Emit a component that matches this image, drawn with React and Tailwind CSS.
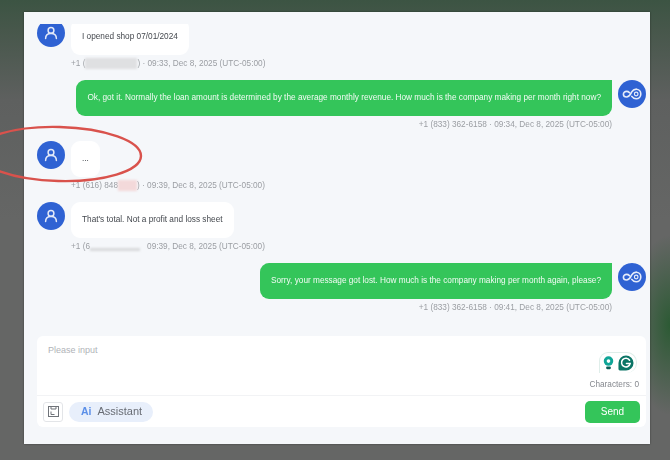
const UserAvatar = () => (
  <div className="w-[28px] h-[28px] shrink-0 rounded-full bg-[#2f62d3] flex items-center justify-center">
    <svg width="14" height="14" viewBox="0 0 14 14" fill="none" stroke="#e3e9f8" strokeWidth="1.5">
      <circle cx="7" cy="4.4" r="2.9" />
      <path d="M1.6 12.6c0-3 2.2-5 5.4-5s5.4 2 5.4 5" strokeLinecap="round" />
    </svg>
  </div>
);

const AgentAvatar = () => (
  <div className="w-[28px] h-[28px] shrink-0 rounded-full bg-[#2f62d3] flex items-center justify-center">
    <svg width="20" height="14" viewBox="0 0 20 14" fill="none" stroke="#e6ecfa" strokeWidth="1.6">
      <path d="M7.4 5.6C6.6 4.8 5.6 4.4 4.6 4.4 3 4.4 1.4 5.4 1.4 7.2s1.6 2.8 3.2 2.8c2.6 0 3.6-2.4 5-4.8 1-1.8 2.6-3 4.6-3" strokeLinecap="round" />
      <path d="M14.2 2.2c2.6 0 4.6 2.1 4.6 4.8s-2 4.8-4.6 4.8c-2 0-3.4-.9-4.4-2.4" strokeLinecap="round" />
      <circle cx="14.2" cy="7" r="1.8" strokeWidth="1.2" />
    </svg>
  </div>
);

const Meta = ({ children, right }) => (
  <div className={`text-[8.25px] leading-[17px] text-[#9b9ea3] whitespace-nowrap flex ${right ? 'justify-end' : ''}`}>
    {children}
  </div>
);

const Hidden = ({ className }) => <span className={`inline-block blur-[1px] ${className}`}></span>;

const Incoming = ({ text, meta }) => (
  <div className="flex gap-[6px] mb-[8px]">
    <UserAvatar />
    <div>
      <div className="h-[36px] w-fit flex items-center px-[11px] bg-white rounded-[9px] text-[8.25px] text-[#44484e]">
        {text}
      </div>
      <Meta>{meta}</Meta>
    </div>
  </div>
);

const Outgoing = ({ text, meta }) => (
  <div className="flex justify-end gap-[6px] mb-[8px]">
    <div>
      <div className="h-[36px] w-fit flex items-center px-[11px] bg-[#34c55a] rounded-[9px] rounded-tr-none text-[8.25px] text-[#f2fbf4] whitespace-nowrap">
        {text}
      </div>
      <Meta right>{meta}</Meta>
    </div>
    <AgentAvatar />
  </div>
);

export default function App() {
  return (
    <div className="relative w-[670px] h-[460px] overflow-hidden pt-[12px] pl-[24px] pr-[20px] pb-[16px] font-['Liberation_Sans',Arial,sans-serif] bg-[radial-gradient(ellipse_40px_90px_at_100%_325px,#2c5a34_0%,#2c5a3400_100%),linear-gradient(180deg,#3c5443_0px,#47574b_30px,#5e605f_100px,#656665_220px,#656665_460px)]">
      <div className="h-full flex flex-col bg-[#f5f7fa] pl-[13px] pr-[4px] pt-[12px] pb-[17px] shadow-[0_0_2px_#00000066] blur-[0.3px]">
        {/* Messages */}
        <div className="flex-1 min-h-0 overflow-hidden flex flex-col justify-end pb-[12px]">
          <Incoming
            text="I opened shop 07/01/2024"
            meta={<>+1 (<Hidden className="w-[52px] h-[11px] mt-[3px] bg-[#dfe0e2]" />) · 09:33, Dec 8, 2025 (UTC-05:00)</>}
          />
          <Outgoing
            text="Ok, got it. Normally the loan amount is determined by the average monthly revenue. How much is the company making per month right now?"
            meta="+1 (833) 362-6158 · 09:34, Dec 8, 2025 (UTC-05:00)"
          />
          <Incoming
            text="..."
            meta={<>+1 (616) 848<Hidden className="w-[19px] h-[11px] mt-[3px] bg-[#f3d9da]" />) · 09:39, Dec 8, 2025 (UTC-05:00)</>}
          />
          <Incoming
            text="That's total. Not a profit and loss sheet"
            meta={<>+1 (6<Hidden className="w-[50px] h-[3px] mt-[10px] mr-[7px] bg-[#d8dadc]" />09:39, Dec 8, 2025 (UTC-05:00)</>}
          />
          <Outgoing
            text="Sorry, your message got lost. How much is the company making per month again, please?"
            meta="+1 (833) 362-6158 · 09:41, Dec 8, 2025 (UTC-05:00)"
          />
        </div>

        {/* Input box */}
        <div className="h-[91px] shrink-0 bg-white rounded-[6px] flex flex-col">
          <div className="flex-1 px-[11px] pt-[8px] pr-[7px] border-b border-[#f2f3f5] flex flex-col">
            <div className="text-[9px] leading-[12px] text-[#b0b3b8]">Please input</div>
            <div className="self-end mt-[-4px] mr-[2px] w-[38px] h-[21px] border border-[#dfeeea] border-b-0 rounded-t-[9px] rounded-r-[10px] flex items-center justify-center gap-[4px]">
              <svg width="11" height="14" viewBox="0 0 12 15">
                <circle cx="6" cy="5.4" r="5.2" fill="#0fa597" />
                <circle cx="6" cy="5.4" r="2" fill="#fff" />
                <rect x="3.4" y="11.4" width="5.2" height="2.8" rx="1.2" fill="#0b5f58" />
              </svg>
              <svg width="16" height="16" viewBox="0 0 17 17">
                <path d="M8.5 0.5a8 8 0 1 1 0 16H2a1.5 1.5 0 0 1-1.5-1.5V8.5a8 8 0 0 1 8-8z" fill="#0b7566" />
                <path d="M12.3 5.6a4.6 4.6 0 1 0 .6 3.4H9" fill="none" stroke="#fff" strokeWidth="1.6" strokeLinecap="round" />
              </svg>
            </div>
            <div className="self-end mt-[6px] text-[8.25px] leading-[12px] text-[#85888e]">Characters: 0</div>
          </div>
          <div className="h-[31px] shrink-0 flex items-center px-[6px]">
            <button className="w-[20px] h-[20px] flex items-center justify-center border border-[#e3e5e8] rounded-[3px] bg-white">
              <svg width="11" height="11" viewBox="0 0 11 11" fill="none" stroke="#6f7379" strokeWidth="1">
                <rect x="0.5" y="0.5" width="10" height="10" />
                <path d="M3 0.5v2.5h5v-2.5M3 5.5v3h3.5" />
              </svg>
            </button>
            <div className="ml-[6px] w-[84px] h-[20px] rounded-full bg-[#e8effb] flex items-center pl-[12px] gap-[6px]">
              <span className="text-[10.5px] font-semibold text-[#5b8fe8]">Ai</span>
              <span className="text-[11px] text-[#686c74]">Assistant</span>
            </div>
            <button className="ml-auto w-[55px] h-[22px] rounded-[5px] bg-[#34c55a] text-white text-[10px]">Send</button>
          </div>
        </div>
      </div>

      {/* Hand-drawn red circle */}
      <svg className="absolute inset-0 pointer-events-none" width="670" height="460" fill="none">
        <ellipse cx="59" cy="154" rx="82" ry="27" transform="rotate(1.5 59 154)" stroke="#d9524c" strokeWidth="2.4" />
      </svg>
    </div>
  );
}
